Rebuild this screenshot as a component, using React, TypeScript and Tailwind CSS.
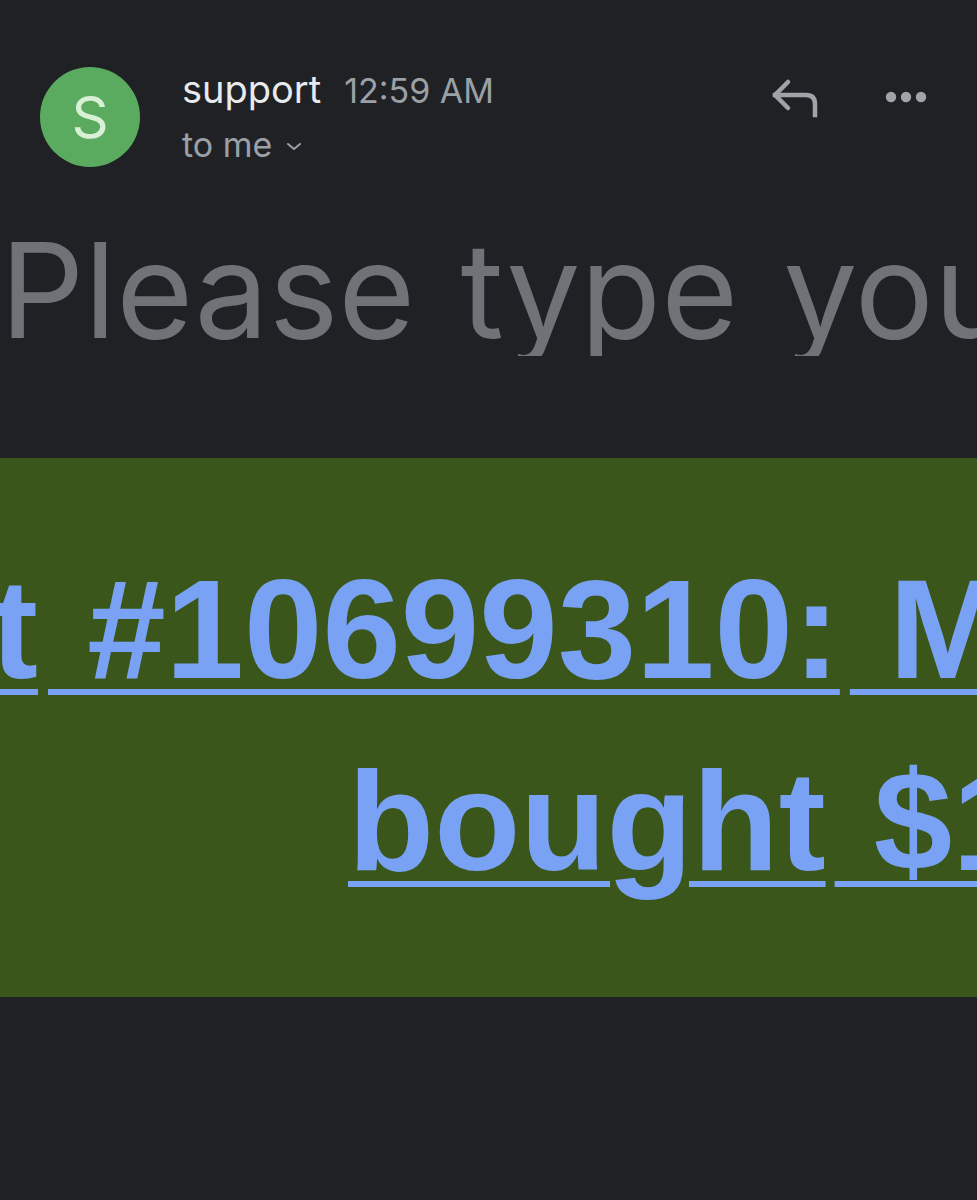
import React from "react";

export default function App() {
  return (
    <div className="w-[977px] h-[1200px] bg-[#202124] overflow-hidden relative">
      {/* Header */}
      <div className="flex items-start pt-[67px] pl-[40px] pr-[50px]">
        <div className="w-[100px] h-[100px] rounded-full bg-[#5aab5f] flex items-center justify-center shrink-0">
          <span className="text-[#d8f0d6] text-[58px] leading-none font-['Inter',sans-serif] font-normal">S</span>
        </div>
        <div className="ml-[42px] flex flex-col font-['Inter',sans-serif]">
          <div className="flex items-baseline h-[44px] leading-[44px]">
            <span className="text-[#e8eaed] text-[38px]">support</span>
            <span className="ml-[23px] text-[#9aa0a6] text-[34px]">12:59 AM</span>
          </div>
          <div className="flex items-center mt-[12px] h-[44px] leading-[44px]">
            <span className="text-[#9aa0a6] text-[34px]">to me</span>
            <svg className="ml-[14px] mt-[2px]" width="16" height="9" viewBox="0 0 16 9" fill="none">
              <path d="M2 2 L8 7 L14 2" stroke="#9aa0a6" strokeWidth="2" strokeLinecap="round" strokeLinejoin="round" />
            </svg>
          </div>
        </div>
        <div className="ml-auto flex items-center h-[60px]">
          <svg width="50" height="48" viewBox="0 0 50 48" fill="none">
            <path d="M18 9 L5 22 L18 35" stroke="#a0a3a8" strokeWidth="4.5" strokeLinecap="round" strokeLinejoin="round" />
            <path d="M5 22 H36 Q45 22 45 31 V42" stroke="#a0a3a8" strokeWidth="4.5" strokeLinecap="square" strokeLinejoin="round" fill="none" />
          </svg>
          <svg className="ml-[65px]" width="42" height="12" viewBox="0 0 42 12">
            <circle cx="6" cy="6" r="5.2" fill="#a0a3a8" />
            <circle cx="21" cy="6" r="5.2" fill="#a0a3a8" />
            <circle cx="36" cy="6" r="5.2" fill="#a0a3a8" />
          </svg>
        </div>
      </div>

      {/* Big prompt text */}
      <div className="mt-[57px] whitespace-nowrap overflow-hidden font-['Inter',sans-serif] text-[132px] leading-[132px] text-[#6f7276] tracking-[0px] [word-spacing:8px]">
        Please type you
      </div>

      {/* Green band */}
      <div className="mt-[102px] bg-[#3a561b] pt-[75px] pb-[80px] font-['Liberation_Sans',Arial,sans-serif] font-bold text-[141px] leading-[192px] text-[#79a2f4] whitespace-nowrap overflow-hidden">
        <div className="-ml-[9px] flex">
          <span className="underline decoration-[6px] underline-offset-[11px]">t</span>
          <span className="ml-[10px] underline decoration-[6px] underline-offset-[11px]">&nbsp;#10699310:</span>
          <span className="ml-[10px] underline decoration-[6px] underline-offset-[11px]">&nbsp;M</span>
        </div>
        <div className="pl-[348px] flex">
          <span className="underline decoration-[6px] underline-offset-[11px]">bought</span>
          <span className="ml-[9px] underline decoration-[6px] underline-offset-[11px]">&nbsp;$1</span>
        </div>
      </div>
    </div>
  );
}
